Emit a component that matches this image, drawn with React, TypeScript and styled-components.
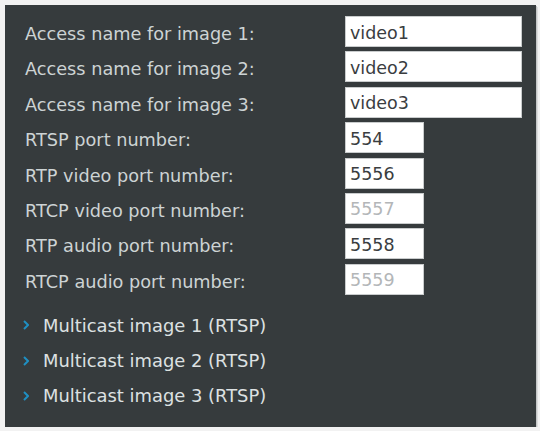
import React from "react";
import styled, { createGlobalStyle } from "styled-components";

const GlobalStyle = createGlobalStyle`
  html, body { margin: 0; padding: 0; background: #f2f2f2; }
  body { font-family: "DejaVu Sans", Verdana, sans-serif; }
`;

const Panel = styled.div`
  margin: 5px 0 0 5px;
  width: 531px;
  height: 422px;
  box-sizing: border-box;
  background: #363b3d;
  box-shadow: 1px 1px 0 #c4c6c7, 2px 2px 0 #dcdddd;
  padding: 11px 0 0 20px;
  display: flex;
  flex-direction: column;
  overflow: hidden;
`;

const Form = styled.div`
  display: grid;
  grid-template-columns: 320px auto;
  grid-auto-rows: 31px;
  row-gap: 4.4px;
  align-items: center;
`;

const Label = styled.label`
  font-size: 17.7px;
  color: #cdd3d4;
  padding-top: 5px;
  line-height: 26px;
  white-space: nowrap;
`;

const Field = styled.input<{ $wide?: boolean }>`
  width: ${(p) => (p.$wide ? "177px" : "79px")};
  height: 31px;
  box-sizing: border-box;
  border: 1px solid #c9cccd;
  background: #ffffff;
  padding: 2px 0 0 4px;
  margin: 0;
  font-family: "DejaVu Sans", Verdana, sans-serif;
  font-size: 17.5px;
  color: #3a3d3f;
  outline: none;
  &:disabled {
    color: #b3b6b8;
    background: #ffffff;
    opacity: 1;
    -webkit-text-fill-color: #b3b6b8;
  }
`;

const LinkList = styled.div`
  margin-top: 13px;
  display: flex;
  flex-direction: column;
`;

const LinkRow = styled.div`
  height: 35.3px;
  display: flex;
  align-items: center;
  gap: 14px;
  margin-left: -2px;
  color: #dde1e2;
  font-size: 17.9px;
  white-space: nowrap;
`;

const Chevron = () => (
  <svg width="6" height="10" viewBox="0 0 6 10" style={{ flex: "none" }}>
    <polyline
      points="1,1 5,5 1,9"
      fill="none"
      stroke="#1f8fc2"
      strokeWidth="2"
    />
  </svg>
);

const rows: { label: string; value: string; wide?: boolean; disabled?: boolean }[] = [
  { label: "Access name for image 1:", value: "video1", wide: true },
  { label: "Access name for image 2:", value: "video2", wide: true },
  { label: "Access name for image 3:", value: "video3", wide: true },
  { label: "RTSP port number:", value: "554" },
  { label: "RTP video port number:", value: "5556" },
  { label: "RTCP video port number:", value: "5557", disabled: true },
  { label: "RTP audio port number:", value: "5558" },
  { label: "RTCP audio port number:", value: "5559", disabled: true },
];

export default function App() {
  return (
    <>
      <GlobalStyle />
      <Panel>
        <Form>
          {rows.map((r) => (
            <React.Fragment key={r.label}>
              <Label>{r.label}</Label>
              <Field $wide={r.wide} defaultValue={r.value} disabled={r.disabled} />
            </React.Fragment>
          ))}
        </Form>
        <LinkList>
          {[1, 2, 3].map((n) => (
            <LinkRow key={n}>
              <Chevron />
              Multicast image {n} (RTSP)
            </LinkRow>
          ))}
        </LinkList>
      </Panel>
    </>
  );
}
